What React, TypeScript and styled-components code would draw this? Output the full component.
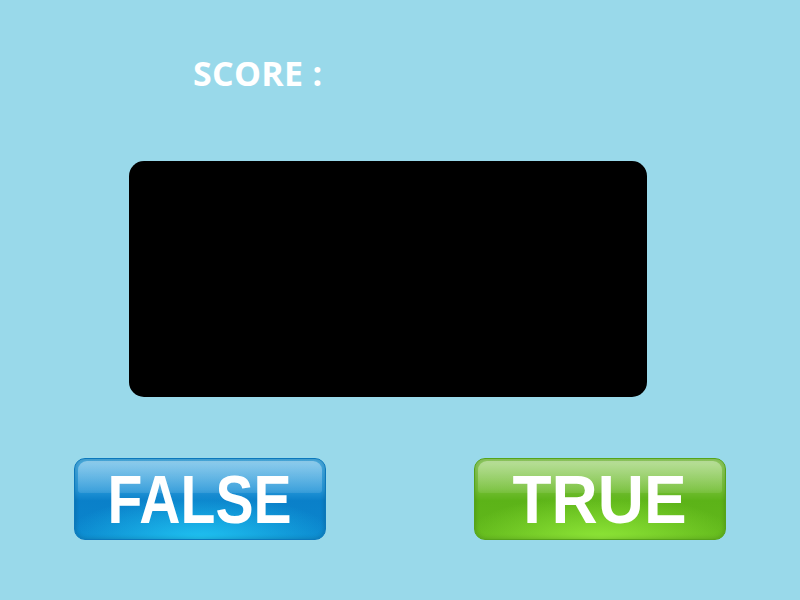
import styled, { createGlobalStyle } from 'styled-components';

const GlobalStyle = createGlobalStyle`
  html, body {
    margin: 0;
    padding: 0;
    background: #99d9ea;
  }
  #root {
    min-height: 100vh;
  }
`;

const Page = styled.div`
  width: 800px;
  height: 600px;
  background: #99d9ea;
  display: flex;
  flex-direction: column;
  overflow: hidden;
`;

const ScoreLabel = styled.div`
  margin: 51px 0 0 193px;
  font-family: 'Open Sans', 'Liberation Sans', sans-serif;
  font-weight: 700;
  font-size: 34px;
  line-height: 44px;
  color: #ffffff;
  letter-spacing: 0.3px;
`;

const Board = styled.div`
  margin: 66px 0 0 129px;
  width: 518px;
  height: 236px;
  background: #000000;
  border-radius: 15px;
`;

const ButtonRow = styled.div`
  margin-top: 61px;
  display: grid;
  grid-template-columns: 400px 400px;
`;

const Cell = styled.div`
  display: flex;
  justify-content: center;
`;

const palettes = {
  blue: {
    border: '#0b78bc',
    base: 'linear-gradient(180deg, #4aaee2 0%, #2596d8 38%, #0a80c9 52%, #0b86cd 100%)',
    glow: 'radial-gradient(ellipse 55% 55% at 50% 100%, rgba(35, 205, 248, 0.85), rgba(35, 205, 248, 0) 100%)',
    gloss: 'linear-gradient(180deg, rgba(255,255,255,0.38) 0%, rgba(255,255,255,0.1) 100%)',
  },
  green: {
    border: '#55a41a',
    base: 'linear-gradient(180deg, #92ce62 0%, #72be33 38%, #5cb318 52%, #62b81c 100%)',
    glow: 'radial-gradient(ellipse 55% 55% at 50% 100%, rgba(150, 238, 60, 0.85), rgba(150, 238, 60, 0) 100%)',
    gloss: 'linear-gradient(180deg, rgba(255,255,255,0.36) 0%, rgba(255,255,255,0.08) 100%)',
  },
};

const GlossButton = styled.button<{ $tone: 'blue' | 'green' }>`
  position: relative;
  width: 252px;
  height: 82px;
  border: 1px solid ${p => palettes[p.$tone].border};
  border-radius: 11px;
  background: ${p => palettes[p.$tone].glow}, ${p => palettes[p.$tone].base};
  box-shadow: inset 0 0 5px rgba(0, 0, 0, 0.2);
  padding: 0;
  cursor: pointer;
  overflow: hidden;
  display: flex;
  align-items: center;
  justify-content: center;

  &::before {
    content: '';
    position: absolute;
    left: 3px;
    right: 3px;
    top: 2px;
    height: 40%;
    border-radius: 9px 9px 3px 3px;
    background: ${p => palettes[p.$tone].gloss};
  }
`;

const ButtonText = styled.span<{ $scale: number }>`
  position: relative;
  display: inline-block;
  font-family: 'Liberation Sans', Arial, sans-serif;
  font-weight: 700;
  font-size: 68px;
  line-height: 1;
  color: #ffffff;
  margin-top: -1px;
  transform: scaleX(${p => p.$scale});
`;

export default function App() {
  return (
    <Page>
      <GlobalStyle />
      <ScoreLabel>SCORE :</ScoreLabel>
      <Board />
      <ButtonRow>
        <Cell>
          <GlossButton $tone="blue">
            <ButtonText $scale={0.84}>FALSE</ButtonText>
          </GlossButton>
        </Cell>
        <Cell>
          <GlossButton $tone="green">
            <ButtonText $scale={0.94}>TRUE</ButtonText>
          </GlossButton>
        </Cell>
      </ButtonRow>
    </Page>
  );
}
